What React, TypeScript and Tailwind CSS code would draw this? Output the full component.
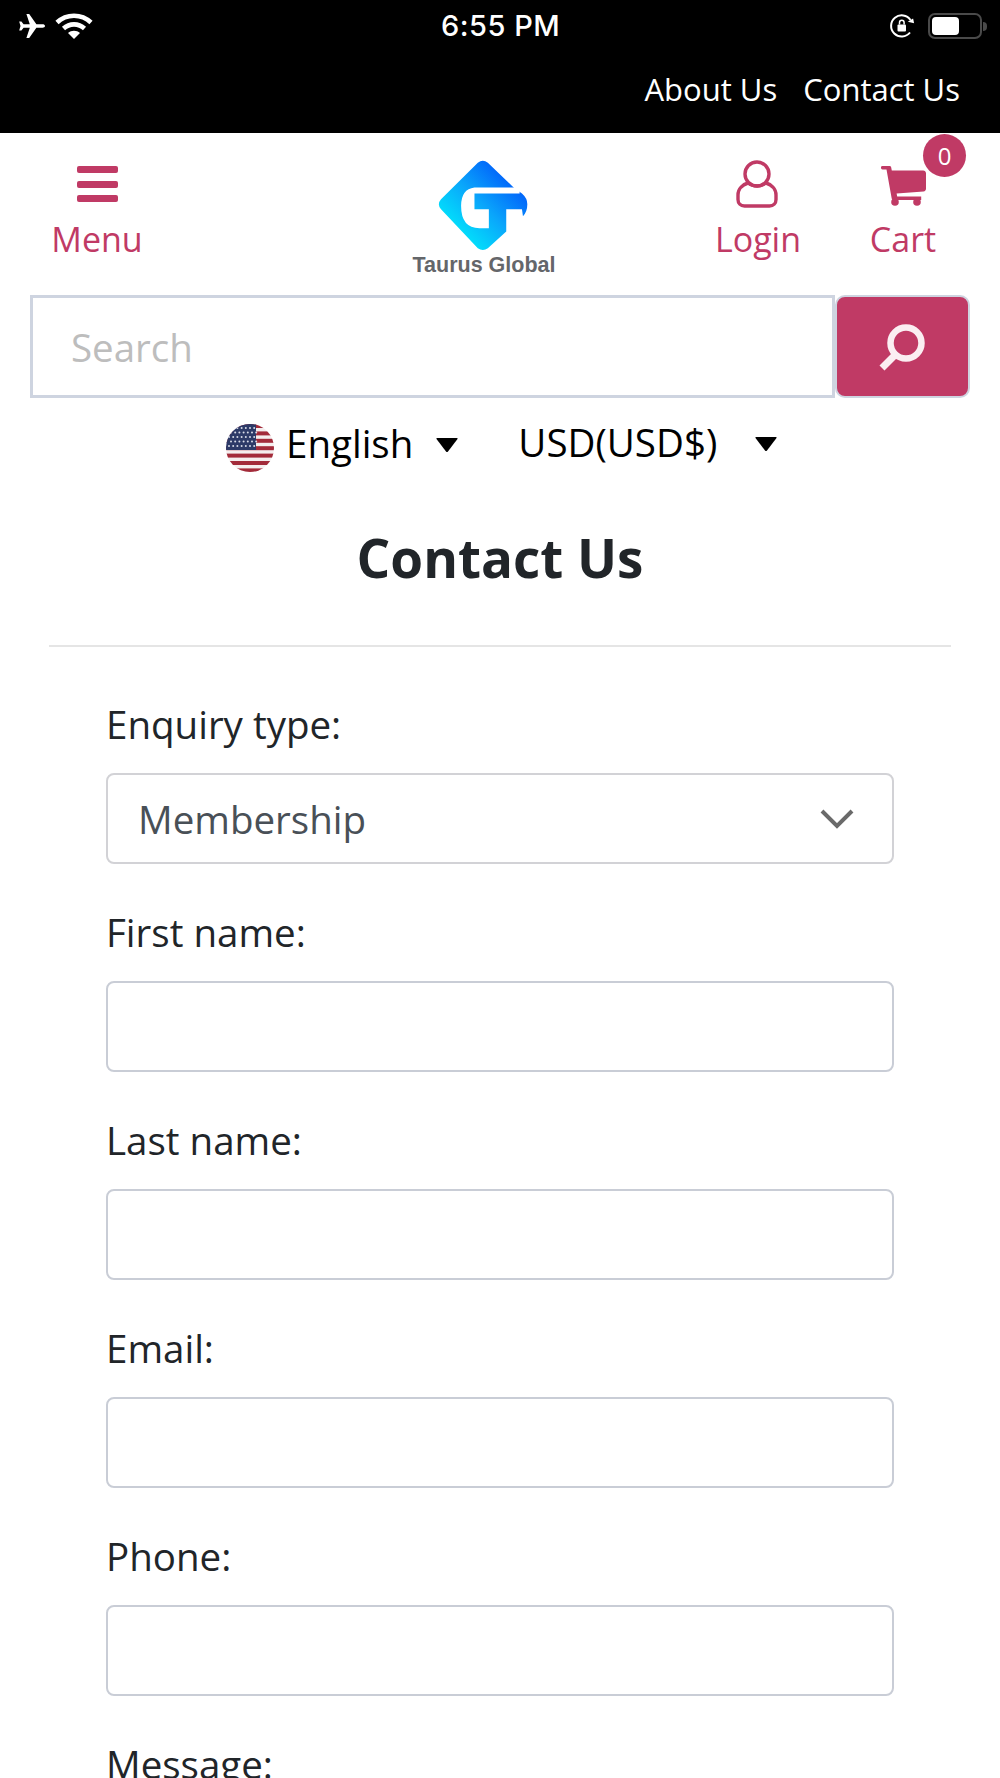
const fields = ['First name:', 'Last name:', 'Email:', 'Phone:']

function Airplane() {
  return (
    <svg viewBox="0 0 26 24" className="h-6 w-[26px]" fill="white">
      <path d="M26 12c0-1.2-1.2-1.7-2.4-1.7h-6.2L10.2 0H7.4l3.4 10.3H4.6L2.4 7.4H0.2l1.3 4.6-1.3 4.6h2.2l2.2-2.9h6.2L7.4 24h2.8l7.2-10.3h6.2c1.2 0 2.4-.5 2.4-1.7z" />
    </svg>
  )
}

function Wifi() {
  return (
    <svg viewBox="0 0 38 28" className="h-7 w-[38px]" fill="none" stroke="white" strokeWidth="4.6">
      <path d="M2 10.5c9.5-9 24.5-9 34 0" />
      <path d="M8.5 16.5c6-5.5 15-5.5 21 0" />
      <path d="M19 27l-6-6c3.4-3 8.6-3 12 0z" fill="white" stroke="none" />
    </svg>
  )
}

function RotationLock() {
  return (
    <svg viewBox="0 0 26 26" className="h-[26px] w-[26px]" fill="none">
      <path d="M21 19.5A10.6 10.6 0 1 1 21.5 7" stroke="white" strokeWidth="2" />
      <path d="M19 9.5h6.5l-2-4.5z" fill="white" transform="rotate(12 22 8)" />
      <rect x="8.5" y="11.5" width="8.5" height="7" rx="1" fill="white" />
      <path d="M10.5 11.5V9.5a2.3 2.3 0 0 1 4.6 0v2" stroke="white" strokeWidth="1.5" />
    </svg>
  )
}

function UserIcon() {
  return (
    <svg viewBox="0 0 42 48" className="h-12 w-[42px]" fill="none" stroke="#c03a65" strokeWidth="3.4">
      <circle cx="21" cy="14" r="12" />
      <path d="M12 23c-5 1.5-10 5.5-10 12v4.500c0 3.500 2.500 6.500 6.500 6.500h25c4 0 6.500-3 6.500-6.500V35c0-6.500-5-10.500-10-12-2.500 2-5.500 3-8.500 3s-7-1-9.500-3z" />
    </svg>
  )
}

function CartIcon() {
  return (
    <svg viewBox="0 0 46 40" className="h-10 w-[46px]" fill="#c03a65">
      <path d="M1 1.500c0-1 .5-1.500 1.500-1.500h7c1 0 1.500.5 1.700 1.500l.6 3h31.400c1.500 0 2.800 1.200 2.800 2.800v15.400c0 1.400-1 2.500-2.400 2.700l-27 2.100.6 3h24v3.500H13.500c-1 0-1.600-.5-1.800-1.400L6.500 3.500H2.500C1.500 3.500 1 2.500 1 1.500z" />
      <circle cx="15" cy="36" r="3.800" />
      <circle cx="37" cy="36" r="3.800" />
    </svg>
  )
}

function SearchIcon() {
  return (
    <svg viewBox="0 0 48 48" className="ml-[-3px] h-12 w-12" fill="none" stroke="#fbeef2">
      <circle cx="29" cy="20" r="15.500" strokeWidth="6.500" />
      <path d="M19 31L5 45" strokeWidth="7" />
    </svg>
  )
}

function Caret() {
  return (
    <svg viewBox="0 0 22 14" className="h-[14px] w-[22px]" fill="black">
      <path d="M1 0h20q1 0 .5 1L12 13.500q-1 1-2 0L.5 1Q0 0 1 0z" />
    </svg>
  )
}

function UsFlag() {
  const stars = [0, 1, 2, 3, 4, 5, 6]
  return (
    <svg viewBox="0 0 48 48" className="h-12 w-12 rounded-full">
      <rect width="48" height="48" fill="#f4eeee" />
      {[0, 7.4, 14.800, 22.200, 29.600, 37, 44.400].map((y) => (
        <rect key={y} y={y} width="48" height="4" fill="#a32b3a" />
      ))}
      <rect width="30" height="26" fill="#2d3a68" />
      {stars.map((i) =>
        [0, 1, 2, 3, 4].map((j) => (
          <circle key={`${i}-${j}`} cx={3 + i * 4.200 + (j % 2) * 2} cy={4 + j * 4.500} r="1" fill="#d8dbe8" />
        ))
      )}
    </svg>
  )
}

function Logo() {
  return (
    <svg viewBox="230 50 290 285" className="ml-[1px] h-[96px] w-[97px]">
      <defs>
        <linearGradient id="logoGrad" x1="1" y1="0" x2="0" y2="1">
          <stop offset="0.15" stopColor="#0058fa" />
          <stop offset="0.5" stopColor="#0aa6fb" />
          <stop offset="0.85" stopColor="#00ecfb" />
        </linearGradient>
      </defs>
      <path
        d="M355 66Q370 54 385 66L462 140L487 158Q503 172 503 190Q503 212 490 226L487 205H440V272L385 322Q370 332 355 322L245 205Q232 190 245 175Z"
        fill="url(#logoGrad)"
      />
      <path
        d="M480 140H345Q305 145 305 195Q305 262 360 262H388V205H345V158H480Z"
        fill="white"
      />
    </svg>
  )
}

export default function App() {
  return (
    <div className="h-[1778px] overflow-hidden bg-white font-['Open_Sans',sans-serif] text-[#212529]">
      <div className="h-[133px] bg-black text-white">
        <div className="relative flex h-[52px] items-center justify-between pl-[19px] pr-[13px]">
          <div className="flex items-center gap-[10px]">
            <Airplane />
            <Wifi />
          </div>
          <span className="absolute left-[441px] top-[9px] font-['Inter',sans-serif] text-[29px] font-medium leading-[34px] tracking-[0.5px]">6:55 PM</span>
          <div className="flex items-center gap-[13px]">
            <RotationLock />
            <div className="flex items-center gap-[1px]">
              <div className="h-[26px] w-[54px] rounded-[7px] border-2 border-[#4a4a4a] p-[2px]">
                <div className="h-full w-[27px] rounded-[4px] bg-white" />
              </div>
              <div className="h-[9px] w-[4px] rounded-r bg-[#4a4a4a]" />
            </div>
          </div>
        </div>
        <div className="flex justify-end gap-[26px] pt-[9px] pr-[40px] text-[31px] leading-[56px]">
          <span>About Us</span>
          <span>Contact Us</span>
        </div>
      </div>

      <div className="flex h-[162px] text-[34px] leading-[44px] text-[#c03a65]">
        <div className="flex w-[194px] flex-col items-center pt-[33px]">
          <div className="flex h-[36px] w-[41px] flex-col justify-between">
            <div className="h-[7px] rounded-[2px] bg-[#c03a65]" />
            <div className="h-[7px] rounded-[2px] bg-[#c03a65]" />
            <div className="h-[7px] rounded-[2px] bg-[#c03a65]" />
          </div>
          <span className="mt-[15px]">Menu</span>
        </div>
        <div className="ml-[217px] flex w-[146px] flex-col items-center pt-[24px]">
          <Logo />
          <span className="mt-[1px] font-['Liberation_Sans',sans-serif] text-[21.500px] font-bold leading-[22px] text-[#64666a]">Taurus Global</span>
        </div>
        <div className="ml-[151px] flex w-[98px] flex-col items-center pt-[27px]">
          <UserIcon />
          <span className="mt-[9px] ml-[2px]">Login</span>
        </div>
        <div className="relative ml-[59px] flex w-[76px] flex-col items-center pt-[33px]">
          <CartIcon />
          <span className="mt-[11px]">Cart</span>
          <div className="absolute left-[58px] top-[1px] flex h-[43px] w-[43px] items-center justify-center rounded-full bg-[#c03a65] text-[24px] text-white">0</div>
        </div>
      </div>

      <div className="flex pl-[30px]">
        <input
          placeholder="Search"
          className="h-[103px] w-[805px] border-[3px] border-[#ced4e0] bg-white pl-[38px] text-[38.500px] placeholder:text-[#bdbdbd]"
        />
        <button className="flex h-[103px] w-[135px] items-center justify-center rounded-[10px] border-2 border-[#ced4e0] bg-[#c03a65]">
          <SearchIcon />
        </button>
      </div>

      <div className="mt-[26px] flex h-[48px] items-start text-[38.500px] leading-[46px] text-black">
        <div className="ml-[226px]"><UsFlag /></div>
        <span className="ml-[12px] mt-[-4px]">English</span>
        <div className="ml-[23px] mt-[14px]"><Caret /></div>
        <span className="ml-[60px] mt-[-5px]">USD(USD$)</span>
        <div className="ml-[38px] mt-[13px]"><Caret /></div>
      </div>

      <h1 className="mt-[52px] text-center text-[53px] font-bold leading-[68px]">Contact Us</h1>

      <hr className="mx-[49px] mt-[53px] border-t-2 border-[#e5e5e5]" />

      <form className="mt-[52px] flex flex-col gap-[43px] px-[106px] text-[38.500px] leading-[50px]">
        <div className="flex flex-col gap-[24px]">
          <label>Enquiry type:</label>
          <div className="relative">
            <select className="h-[91px] w-full appearance-none rounded-[8px] border-2 border-[#d2d2d6] bg-white pl-[30px] text-[#495057]">
              <option>Membership</option>
            </select>
            <svg viewBox="0 0 34 20" className="pointer-events-none absolute right-[40px] top-[36px] h-5 w-[34px]" fill="none" stroke="#6a6a6a" strokeWidth="4">
              <path d="M2 2l15 15L32 2" />
            </svg>
          </div>
        </div>
        {fields.map((field) => (
          <div key={field} className="flex flex-col gap-[24px]">
            <label>{field}</label>
            <input className="h-[91px] w-full rounded-[8px] border-2 border-[#c9cdd6] bg-white" />
          </div>
        ))}
        <label>Message:</label>
      </form>
    </div>
  )
}
